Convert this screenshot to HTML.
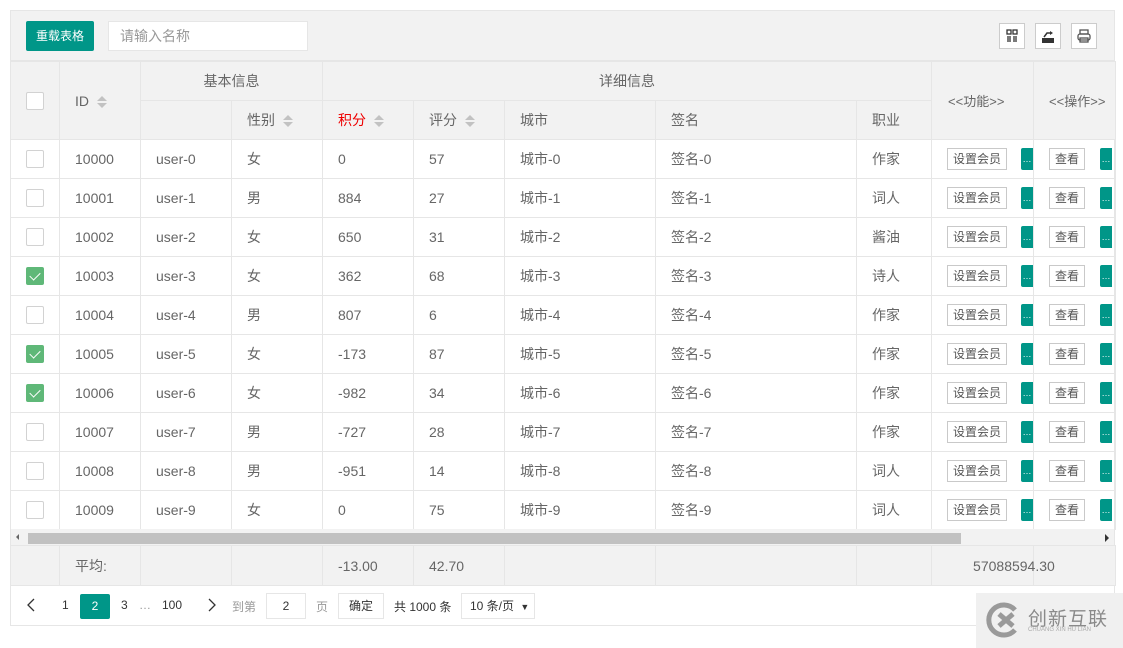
<!DOCTYPE html>
<html><head><meta charset="utf-8"><style>
*{box-sizing:border-box;margin:0;padding:0}
body{width:1123px;height:648px;background:#fff;font-family:"Liberation Sans","Noto Sans CJK SC",sans-serif;font-size:14px;color:#666;position:relative;overflow:hidden}
.box{position:absolute;left:10px;top:10px;width:1105px;height:616px;border:1px solid #e6e6e6}
.tool{position:absolute;left:10px;top:10px;width:1105px;height:51px;background:#f2f2f2;border-bottom:1px solid #e6e6e6}
.btn{position:absolute;left:26px;top:21px;width:68px;height:30px;background:#009688;color:#fff;font-size:12px;line-height:30px;text-align:center;border-radius:2px}
.inp{position:absolute;left:108px;top:21px;width:200px;height:30px;background:#fff;border:1px solid #e6e6e6;color:#999;padding-left:11px;line-height:28px;font-size:14px}
.ic{position:absolute;top:23px;width:26px;height:26px;border:1px solid #ccc;background:#fff}
table{position:absolute;left:10px;top:61px;border-collapse:collapse;table-layout:fixed;width:1105px}
td{border:1px solid #e6e6e6;height:39px;padding-left:15px;white-space:nowrap;overflow:hidden}
thead td{background:#f2f2f2}
.cb{display:inline-block;width:18px;height:18px;border:1px solid #d2d2d2;background:#fff;vertical-align:middle;margin-left:0;border-radius:2px;position:relative}
.ck{background:#5FB878;border-color:#5FB878}
.ck:after{content:"";position:absolute;left:5px;top:2px;width:5px;height:9px;border:solid #fff;border-width:0 1.5px 1.5px 0;transform:rotate(45deg)}
.sort{display:inline-block;margin-left:8px;vertical-align:middle;width:10px;height:12px;position:relative}
.sort:before{content:"";position:absolute;left:0;top:0;border:5px solid transparent;border-top:0;border-bottom:5px solid #c2c2c2}
.sort:after{content:"";position:absolute;left:0;top:7px;border:5px solid transparent;border-bottom:0;border-top:5px solid #c2c2c2}
.sb{display:inline-block;border:1px solid #c9c9c9;height:22px;line-height:20px;padding:0 5px;font-size:12px;color:#555;background:#fff;vertical-align:middle}
.tb{display:inline-block;width:12px;height:22px;background:#009688;vertical-align:middle;border-radius:2px 0 0 2px;color:#fff;font-size:9px;text-align:center;line-height:22px}
.scroll{position:absolute;left:11px;top:529px;width:1103px;height:16px;background:#f2f2f2}
.thumb{position:absolute;left:28px;top:533px;width:933px;height:11px;background:#c1c1c1}
.pg{position:absolute;top:598px;font-size:12px;color:#333}
</style></head><body>
<div class="tool"></div>
<div class="box"></div>
<div class="btn">重载表格</div>
<div class="inp">请输入名称</div>
<div class="ic" style="left:999px"><svg width="24" height="24"><g fill="none" stroke="#333" stroke-width="1.3"><rect x="7" y="6" width="4" height="4"/><rect x="13" y="6" width="4" height="4"/><path d="M8 12v6M10 12v6M14 12v6M16 12v6"/></g></svg></div>
<div class="ic" style="left:1035px"><svg width="24" height="24"><path d="M6 14h12v5H6z" fill="#333"/><path d="M8 13l3-4h3" stroke="#333" stroke-width="1.5" fill="none"/><path d="M14 7l3 2-3 2z" fill="#333"/></svg></div>
<div class="ic" style="left:1071px"><svg width="24" height="24"><g fill="none" stroke="#555" stroke-width="1.3"><rect x="8" y="6" width="8" height="4"/><rect x="6" y="10" width="12" height="6" rx="2"/><rect x="8" y="14" width="8" height="4"/></g></svg></div>
<table>
<colgroup><col style="width:49px"><col style="width:81px"><col style="width:91px"><col style="width:91px"><col style="width:91px"><col style="width:91px"><col style="width:151px"><col style="width:201px"><col style="width:75px"><col style="width:102px"><col style="width:82px"></colgroup>
<thead>
<tr><td rowspan="2"><span class="cb"></span></td><td rowspan="2">ID<span class="sort"></span></td><td colspan="2" style="text-align:center;padding:0">基本信息</td><td colspan="5" style="text-align:center;padding:0">详细信息</td><td rowspan="2" style="padding-left:16px;font-size:13px">&lt;&lt;功能&gt;&gt;</td><td rowspan="2" style="padding-left:15px;font-size:13px">&lt;&lt;操作&gt;&gt;</td></tr>
<tr><td></td><td>性别<span class="sort"></span></td><td style="color:#e00">积分<span class="sort"></span></td><td>评分<span class="sort"></span></td><td>城市</td><td>签名</td><td>职业</td></tr>
</thead>
<tbody>
<tr><td><span class="cb"></span></td><td>10000</td><td>user-0</td><td>女</td><td>0</td><td>57</td><td>城市-0</td><td>签名-0</td><td>作家</td><td><span class="sb">设置会员</span> <span class="tb" style="margin-left:10px">…</span></td><td><span class="sb">查看</span> <span class="tb" style="margin-left:11px">…</span></td></tr>
<tr><td><span class="cb"></span></td><td>10001</td><td>user-1</td><td>男</td><td>884</td><td>27</td><td>城市-1</td><td>签名-1</td><td>词人</td><td><span class="sb">设置会员</span> <span class="tb" style="margin-left:10px">…</span></td><td><span class="sb">查看</span> <span class="tb" style="margin-left:11px">…</span></td></tr>
<tr><td><span class="cb"></span></td><td>10002</td><td>user-2</td><td>女</td><td>650</td><td>31</td><td>城市-2</td><td>签名-2</td><td>酱油</td><td><span class="sb">设置会员</span> <span class="tb" style="margin-left:10px">…</span></td><td><span class="sb">查看</span> <span class="tb" style="margin-left:11px">…</span></td></tr>
<tr><td><span class="cb ck"></span></td><td>10003</td><td>user-3</td><td>女</td><td>362</td><td>68</td><td>城市-3</td><td>签名-3</td><td>诗人</td><td><span class="sb">设置会员</span> <span class="tb" style="margin-left:10px">…</span></td><td><span class="sb">查看</span> <span class="tb" style="margin-left:11px">…</span></td></tr>
<tr><td><span class="cb"></span></td><td>10004</td><td>user-4</td><td>男</td><td>807</td><td>6</td><td>城市-4</td><td>签名-4</td><td>作家</td><td><span class="sb">设置会员</span> <span class="tb" style="margin-left:10px">…</span></td><td><span class="sb">查看</span> <span class="tb" style="margin-left:11px">…</span></td></tr>
<tr><td><span class="cb ck"></span></td><td>10005</td><td>user-5</td><td>女</td><td>-173</td><td>87</td><td>城市-5</td><td>签名-5</td><td>作家</td><td><span class="sb">设置会员</span> <span class="tb" style="margin-left:10px">…</span></td><td><span class="sb">查看</span> <span class="tb" style="margin-left:11px">…</span></td></tr>
<tr><td><span class="cb ck"></span></td><td>10006</td><td>user-6</td><td>女</td><td>-982</td><td>34</td><td>城市-6</td><td>签名-6</td><td>作家</td><td><span class="sb">设置会员</span> <span class="tb" style="margin-left:10px">…</span></td><td><span class="sb">查看</span> <span class="tb" style="margin-left:11px">…</span></td></tr>
<tr><td><span class="cb"></span></td><td>10007</td><td>user-7</td><td>男</td><td>-727</td><td>28</td><td>城市-7</td><td>签名-7</td><td>作家</td><td><span class="sb">设置会员</span> <span class="tb" style="margin-left:10px">…</span></td><td><span class="sb">查看</span> <span class="tb" style="margin-left:11px">…</span></td></tr>
<tr><td><span class="cb"></span></td><td>10008</td><td>user-8</td><td>男</td><td>-951</td><td>14</td><td>城市-8</td><td>签名-8</td><td>词人</td><td><span class="sb">设置会员</span> <span class="tb" style="margin-left:10px">…</span></td><td><span class="sb">查看</span> <span class="tb" style="margin-left:11px">…</span></td></tr>
<tr><td><span class="cb"></span></td><td>10009</td><td>user-9</td><td>女</td><td>0</td><td>75</td><td>城市-9</td><td>签名-9</td><td>词人</td><td><span class="sb">设置会员</span> <span class="tb" style="margin-left:10px">…</span></td><td><span class="sb">查看</span> <span class="tb" style="margin-left:11px">…</span></td></tr>
<tr><td colspan="11" style="height:16px;border:0;padding:0"></td></tr>
<tr style="background:#f2f2f2"><td style="height:40px"></td><td>平均:</td><td></td><td></td><td>-13.00</td><td>42.70</td><td></td><td></td><td></td><td style="padding-left:41px;overflow:visible">57088594.30</td><td></td></tr>
</tbody></table>
<div class="scroll"></div><div class="thumb"></div>
<div style="position:absolute;left:16px;top:534px;border:3px solid transparent;border-right:3px solid #666;border-left:0"></div>
<div style="position:absolute;left:1105px;top:534px;border:4px solid transparent;border-left:4px solid #333;border-right:0"></div>
<svg style="position:absolute;left:26px;top:598px" width="10" height="14"><path d="M8 1L2 7l6 6" stroke="#333" stroke-width="1.3" fill="none"/></svg>
<div class="pg" style="left:62px">1</div>
<div style="position:absolute;left:80px;top:594px;width:30px;height:25px;background:#009688;color:#fff;font-size:12px;text-align:center;line-height:25px;border-radius:2px">2</div>
<div class="pg" style="left:121px">3</div>
<div class="pg" style="left:139px;color:#999">…</div>
<div class="pg" style="left:162px">100</div>
<svg style="position:absolute;left:207px;top:598px" width="10" height="14"><path d="M2 1l6 6-6 6" stroke="#333" stroke-width="1.3" fill="none"/></svg>
<div class="pg" style="left:232px;color:#999">到第</div>
<div style="position:absolute;left:266px;top:593px;width:40px;height:26px;border:1px solid #e6e6e6;text-align:center;line-height:24px;font-size:12px;color:#333">2</div>
<div class="pg" style="left:316px;color:#999">页</div>
<div style="position:absolute;left:338px;top:593px;width:46px;height:26px;border:1px solid #e6e6e6;text-align:center;line-height:24px;font-size:12px;color:#333">确定</div>
<div class="pg" style="left:394px">共 1000 条</div>
<div style="position:absolute;left:461px;top:593px;width:74px;height:26px;border:1px solid #e6e6e6;line-height:24px;font-size:12px;color:#333;padding-left:8px">10 条/页 <span style="font-size:9px;margin-left:3px">▼</span></div>
<div style="position:absolute;left:976px;top:593px;width:147px;height:55px;background:#f0f0f0"></div>
<svg style="position:absolute;left:985px;top:602px" width="40" height="36"><path d="M30 8A15 15 0 1 0 30 28" stroke="#9a9a9a" stroke-width="5" fill="none"/><path d="M14 12l14 12M28 12L14 24" stroke="#9a9a9a" stroke-width="5"/></svg>
<div style="position:absolute;left:1028px;top:604px;font-size:19px;color:#8a8a8a;letter-spacing:1px">创新互联</div>
<div style="position:absolute;left:1028px;top:627px;font-size:6px;color:#aaa">CHUANG XIN HU LIAN</div>
</body></html>
